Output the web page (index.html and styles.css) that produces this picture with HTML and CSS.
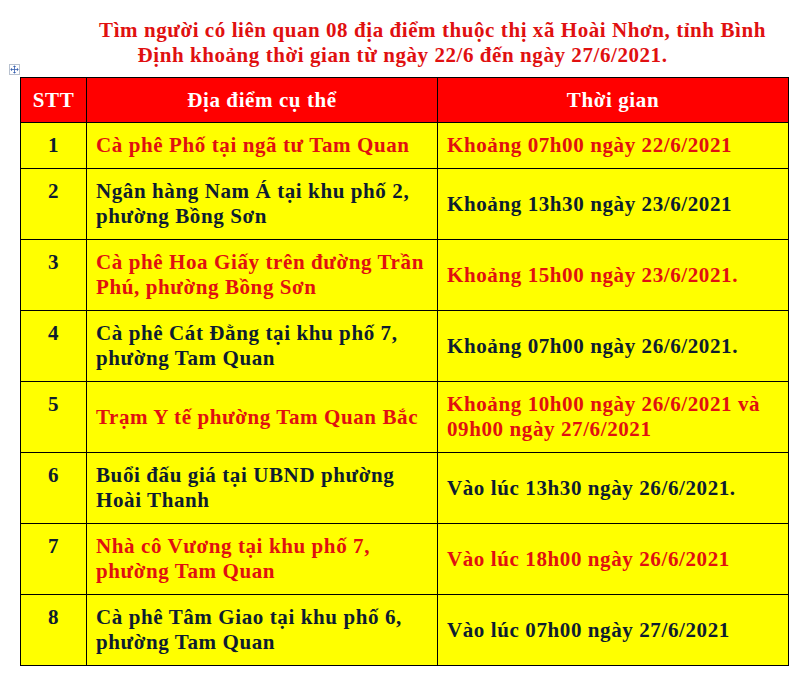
FILE: index.html
```html
<!DOCTYPE html>
<html lang="vi">
<head>
<meta charset="utf-8">
<link rel="stylesheet" href="styles.css">
</head>
<body>
<div class="page">
  <p class="title"><span class="line1">Tìm người có liên quan 08 địa điểm thuộc thị xã Hoài Nhơn, tỉnh Bình</span><br>Định khoảng thời gian từ ngày 22/6 đến ngày 27/6/2021.</p>
  <div class="table-wrap">
    <span class="move-handle"><svg width="11" height="11" viewBox="0 0 11 11"><path d="M5.5 1v9M1 5.5h9" stroke="#3a62b0" stroke-width="1"/><path d="M5.5 0.5l-2 2h4zM5.5 10.5l-2-2h4zM0.5 5.5l2-2v4zM10.5 5.5l-2-2v4z" fill="#3a62b0"/></svg></span>
    <table class="list">
      <colgroup><col class="c1"><col class="c2"><col class="c3"></colgroup>
      <thead>
        <tr><th>STT</th><th>Địa điểm cụ thể</th><th>Thời gian</th></tr>
      </thead>
      <tbody>
        <tr class="red"><td class="num">1</td><td>Cà phê Phố tại ngã tư Tam Quan</td><td>Khoảng 07h00 ngày 22/6/2021</td></tr>
        <tr><td class="num">2</td><td>Ngân hàng Nam Á tại khu phố 2, phường Bồng Sơn</td><td>Khoảng 13h30 ngày 23/6/2021</td></tr>
        <tr class="red"><td class="num">3</td><td>Cà phê Hoa Giấy trên đường Trần Phú, phường Bồng Sơn</td><td>Khoảng 15h00 ngày 23/6/2021.</td></tr>
        <tr><td class="num">4</td><td>Cà phê Cát Đằng tại khu phố 7, phường Tam Quan</td><td>Khoảng 07h00 ngày 26/6/2021.</td></tr>
        <tr class="red"><td class="num">5</td><td>Trạm Y tế phường Tam Quan Bắc</td><td>Khoảng 10h00 ngày 26/6/2021 và 09h00 ngày 27/6/2021</td></tr>
        <tr><td class="num">6</td><td>Buổi đấu giá tại UBND phường Hoài Thanh</td><td>Vào lúc 13h30 ngày 26/6/2021.</td></tr>
        <tr class="red"><td class="num">7</td><td>Nhà cô Vương tại khu phố 7, phường Tam Quan</td><td>Vào lúc 18h00 ngày 26/6/2021</td></tr>
        <tr><td class="num">8</td><td>Cà phê Tâm Giao tại khu phố 6, phường Tam Quan</td><td>Vào lúc 07h00 ngày 27/6/2021</td></tr>
      </tbody>
    </table>
    <span class="resize-handle"></span>
  </div>
</div>
</body>
</html>
```

FILE: styles.css
```css
html, body {
  margin: 0;
  padding: 0;
  background: #fff;
}
.page {
  width: 805px;
  font-family: "Liberation Serif", "Times New Roman", serif;
  font-weight: bold;
}
.title {
  margin: 0;
  padding-top: 18px;
  color: #e01010;
  font-size: 21px;
  line-height: 25px;
  letter-spacing: 0.57px;
  text-align: center;
  white-space: nowrap;
}
.title .line1 {
  display: inline-block;
  margin-left: 60px;
}
.table-wrap {
  position: relative;
  margin: 9px 0 0 20px;
  width: 769px;
}
.move-handle {
  position: absolute;
  left: -11px;
  top: -13px;
  width: 11px;
  height: 11px;
  border: 1px solid #b9c2cf;
  background: #fff;
  display: flex;
  align-items: center;
  justify-content: center;
  box-sizing: border-box;
}
.move-handle svg { width: 9px; height: 9px; }
.resize-handle {
  position: absolute;
  right: -6px;
  bottom: -8px;
  width: 6px;
  height: 6px;
  border: 1px solid #8a8a8a;
  background: #fff;
}
.list {
  border-collapse: collapse;
  width: 769px;
  table-layout: fixed;
  font-size: 21px;
  line-height: 25px;
  letter-spacing: 0.6px;
}
.c1 { width: 66px; }
.c2 { width: 351px; }
.c3 { width: 351px; }
.list th, .list td {
  border: 1px solid #000;
}
.list th {
  background: #ff0000;
  color: #fff;
  height: 44px;
  padding: 0;
  text-align: center;
  vertical-align: middle;
}
.list td {
  background: #ffff00;
  color: #0e1c30;
  padding: 10px 9px;
  text-align: left;
  vertical-align: middle;
}
.list td.num {
  text-align: center;
  vertical-align: top;
  padding-left: 0;
  padding-right: 0;
}
.list tbody tr { height: 71px; }
.list tbody tr:first-child { height: 46px; }
.list tr.red td { color: #e01010; }
.list tr.red td.num { color: #0e1c30; }
```
